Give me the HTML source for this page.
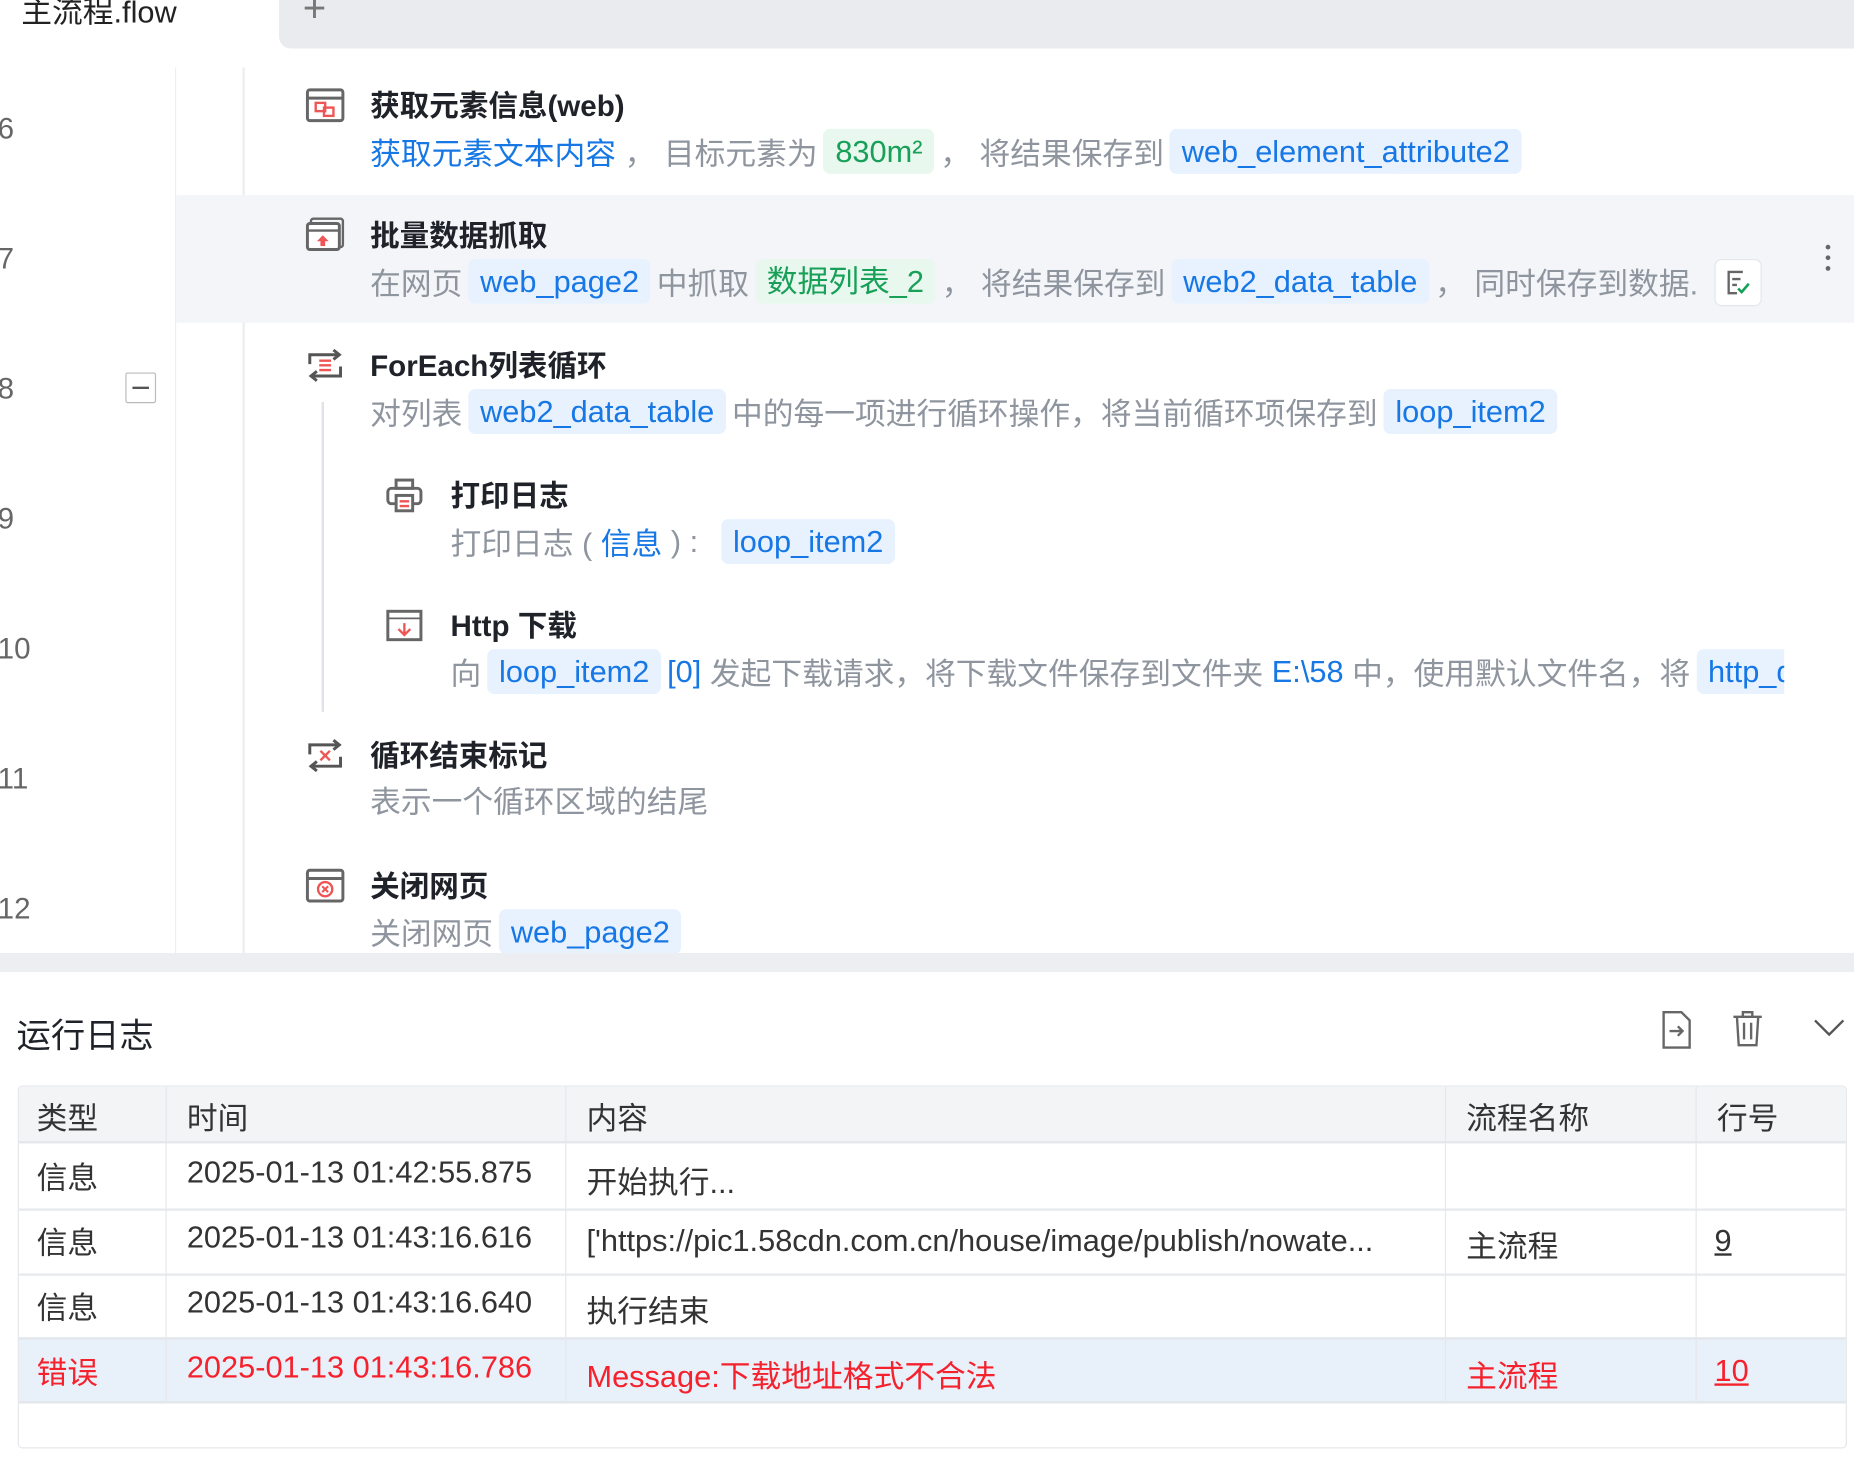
<!DOCTYPE html>
<html><head><meta charset="utf-8"><style>
*{margin:0;padding:0;box-sizing:border-box}
html,body{width:1854px;height:1479px;overflow:hidden;background:#fff}
#w{position:absolute;left:0;top:0;width:1568px;height:1251px;transform:scale(1.18240);transform-origin:0 0;font-family:"Liberation Sans","Noto Sans CJK SC",sans-serif;color:#222}
.a{position:absolute;white-space:nowrap}
.ln{position:absolute;left:-2px;font-size:25px;color:#666}
.t{position:absolute;font-size:25px;font-weight:bold;color:#1f2329}
.s{position:absolute;font-size:26px;color:#8f959e;display:flex;align-items:center;white-space:nowrap;height:38px}
.tg{background:#e8f2ff;color:#1677e5;border-radius:6px;padding:0 10px;height:38px;line-height:38px;margin:0 5px}
.tgg{background:#e9f8ef;color:#18a058}
.b{color:#1677e5}
.ic{position:absolute}
.cell{position:absolute;font-size:26px;color:#333;white-space:nowrap}
</style></head><body><div id="w">
<div class="a" style="left:236px;top:0;width:1332px;height:41px;background:#e9ebef;border-bottom-left-radius:10px"></div>
<div class="a" style="left:18px;top:-10px;font-size:26px;color:#222">主流程.flow</div>
<div class="a" style="left:256px;top:-12px;font-size:34px;color:#777;font-weight:300">+</div>
<div class="a" style="left:148px;top:57px;width:1px;height:749px;background:#eceef1"></div>
<div class="a" style="left:205px;top:57px;width:2px;height:749px;background:#eceef1"></div>
<div class="a" style="left:149px;top:165px;width:1419px;height:108px;background:#f3f5f9"></div>
<div class="ln" style="top:95px">6</div>
<div class="ln" style="top:205px">7</div>
<div class="ln" style="top:315px">8</div>
<div class="ln" style="top:425px">9</div>
<div class="ln" style="top:535px">10</div>
<div class="ln" style="top:645px">11</div>
<div class="ln" style="top:755px">12</div>
<div class="a" style="left:106px;top:315px;width:26px;height:26px;border:1.5px solid #bbb;border-radius:2px"></div>
<div class="a" style="left:112px;top:327px;width:14px;height:2px;background:#555"></div>
<div class="a" style="left:272px;top:340px;width:2px;height:262px;background:#dfe2e6"></div>

<svg class="ic" style="left:258px;top:74px" width="34" height="30" viewBox="0 0 34 30"><rect x="2" y="2" width="30" height="26" rx="2" fill="none" stroke="#666" stroke-width="2.5"/><line x1="2" y1="9" x2="32" y2="9" stroke="#666" stroke-width="2.5"/><rect x="9" y="13" width="8" height="7" fill="none" stroke="#e55" stroke-width="2"/><rect x="16" y="17" width="8" height="7" fill="none" stroke="#e55" stroke-width="2"/></svg>
<div class="t" style="left:313px;top:70px">获取元素信息(web)</div>
<div class="s" style="left:313px;top:109px"><span class="b">获取元素文本内容</span>&nbsp;，&nbsp;目标元素为<span class="tg tgg">830m²</span>，&nbsp;将结果保存到<span class="tg">web_element_attribute2</span></div>

<svg class="ic" style="left:258px;top:183px" width="34" height="30" viewBox="0 0 34 30"><rect x="5" y="2" width="27" height="24" rx="2" fill="none" stroke="#666" stroke-width="2"/><rect x="2" y="6" width="27" height="22" rx="2" fill="#fff" stroke="#666" stroke-width="2.5"/><line x1="2" y1="12" x2="29" y2="12" stroke="#666" stroke-width="2"/><path d="M15 16 L20 21 H17 V25 H13 V21 H10Z" fill="#e55"/></svg>
<div class="t" style="left:313px;top:180px">批量数据抓取</div>
<div class="s" style="left:313px;top:219px;width:1125px;overflow:hidden">在网页<span class="tg">web_page2</span>中抓取<span class="tg tgg">数据列表_2</span>，&nbsp;将结果保存到<span class="tg">web2_data_table</span>，&nbsp;同时保存到数据...</div>
<div class="a" style="left:1450px;top:219px;width:40px;height:40px;border:1px solid #e3e6ea;border-radius:6px;background:#fff"></div>
<svg class="ic" style="left:1458px;top:227px" width="24" height="24" viewBox="0 0 24 24"><path d="M16 3H4v18h7" fill="none" stroke="#666" stroke-width="2"/><line x1="7" y1="9" x2="14" y2="9" stroke="#666" stroke-width="2"/><line x1="7" y1="14" x2="11" y2="14" stroke="#666" stroke-width="2"/><path d="M12 17l3 3 6-7" fill="none" stroke="#18a058" stroke-width="2.2"/></svg>
<div class="a" style="left:1544px;top:207px;width:4px;height:4px;border-radius:2px;background:#666;box-shadow:0 9px 0 #666,0 18px 0 #666"></div>

<svg class="ic" style="left:258px;top:294px" width="34" height="30" viewBox="0 0 34 30"><path d="M4 14V6h24" fill="none" stroke="#555" stroke-width="2.5"/><path d="M24 2l5 4-5 4" fill="none" stroke="#555" stroke-width="2.5"/><path d="M30 16v8H6" fill="none" stroke="#555" stroke-width="2.5"/><path d="M10 20l-5 4 5 4" fill="none" stroke="#555" stroke-width="2.5"/><line x1="12" y1="11" x2="22" y2="11" stroke="#e55" stroke-width="2"/><line x1="12" y1="15" x2="22" y2="15" stroke="#e55" stroke-width="2"/><line x1="12" y1="19" x2="22" y2="19" stroke="#e55" stroke-width="2"/></svg>
<div class="t" style="left:313px;top:290px">ForEach列表循环</div>
<div class="s" style="left:313px;top:329px">对列表<span class="tg">web2_data_table</span>中的每一项进行循环操作，将当前循环项保存到<span class="tg">loop_item2</span></div>

<svg class="ic" style="left:326px;top:404px" width="32" height="30" viewBox="0 0 32 30"><rect x="9" y="2" width="14" height="7" fill="none" stroke="#666" stroke-width="2.5"/><rect x="2" y="9" width="28" height="13" rx="3" fill="none" stroke="#666" stroke-width="2.5"/><rect x="9" y="15" width="14" height="13" fill="#fff" stroke="#666" stroke-width="2.5"/><line x1="12" y1="20" x2="20" y2="20" stroke="#e55" stroke-width="2"/><line x1="12" y1="24" x2="20" y2="24" stroke="#e55" stroke-width="2"/></svg>
<div class="t" style="left:381px;top:400px">打印日志</div>
<div class="s" style="left:381px;top:439px">打印日志&nbsp;(&nbsp;<span class="b">信息</span>&nbsp;)&nbsp;:&nbsp;&nbsp;<span class="tg">loop_item2</span></div>

<svg class="ic" style="left:326px;top:514px" width="32" height="30" viewBox="0 0 32 30"><rect x="2" y="3" width="28" height="24" fill="none" stroke="#666" stroke-width="2.5"/><line x1="2" y1="9" x2="30" y2="9" stroke="#666" stroke-width="1.5"/><path d="M16 13v10M11 18l5 5 5-5" fill="none" stroke="#e55" stroke-width="2"/></svg>
<div class="t" style="left:381px;top:510px">Http 下载</div>
<div class="s" style="left:381px;top:549px;width:1128px;overflow:hidden">向<span class="tg">loop_item2</span><span class="b">[0]</span>&nbsp;发起下载请求，将下载文件保存到文件夹&nbsp;<span class="b">E:\58</span>&nbsp;中，使用默认文件名，将<span class="tg">http_download</span></div>

<svg class="ic" style="left:258px;top:624px" width="34" height="30" viewBox="0 0 34 30"><path d="M4 14V6h24" fill="none" stroke="#555" stroke-width="2.5"/><path d="M24 2l5 4-5 4" fill="none" stroke="#555" stroke-width="2.5"/><path d="M30 16v8H6" fill="none" stroke="#555" stroke-width="2.5"/><path d="M10 20l-5 4 5 4" fill="none" stroke="#555" stroke-width="2.5"/><path d="M13 11l8 8M21 11l-8 8" stroke="#e55" stroke-width="2"/></svg>
<div class="t" style="left:313px;top:620px">循环结束标记</div>
<div class="s" style="left:313px;top:657px">表示一个循环区域的结尾</div>

<svg class="ic" style="left:258px;top:734px" width="34" height="30" viewBox="0 0 34 30"><rect x="2" y="2" width="30" height="26" rx="2" fill="none" stroke="#666" stroke-width="2.5"/><line x1="2" y1="9" x2="32" y2="9" stroke="#666" stroke-width="2.5"/><circle cx="17" cy="18" r="6" fill="none" stroke="#e55" stroke-width="2"/><path d="M14.5 15.5l5 5M19.5 15.5l-5 5" stroke="#e55" stroke-width="1.8"/></svg>
<div class="t" style="left:313px;top:730px">关闭网页</div>
<div class="s" style="left:313px;top:769px">关闭网页<span class="tg">web_page2</span></div>

<div class="a" style="left:0;top:806px;width:1568px;height:16px;background:#eceef2"></div>
<div class="a" style="left:14px;top:853px;font-size:29px;color:#1f2329">运行日志</div>
<svg class="ic" style="left:1404px;top:854px" width="28" height="34" viewBox="0 0 28 34"><path d="M3 2h15l7 7v23H3z" fill="none" stroke="#666" stroke-width="2"/><path d="M8 18h11M15 14l4 4-4 4" fill="none" stroke="#666" stroke-width="2"/></svg>
<svg class="ic" style="left:1464px;top:854px" width="28" height="32" viewBox="0 0 28 32"><path d="M2 6h24M10 6V2h8v4M5 6l1.5 24h15L23 6" fill="none" stroke="#666" stroke-width="2"/><path d="M11 11v14M17 11v14" stroke="#666" stroke-width="2"/></svg>
<svg class="ic" style="left:1533px;top:860px" width="28" height="20" viewBox="0 0 28 20"><path d="M2 3l12 12 12-12" fill="none" stroke="#555" stroke-width="2"/></svg>
<div class="a" style="left:15px;top:918px;width:1547px;height:307px;border:1px solid #e5e7eb;border-radius:4px;overflow:hidden">
 <div class="a" style="left:0;top:0;width:1547px;height:48px;background:#f3f4f6;border-bottom:2px solid #e5e7eb"></div>
 <div class="a" style="left:0;top:103px;width:1547px;height:2px;background:#e8eaed"></div>
 <div class="a" style="left:0;top:158px;width:1547px;height:2px;background:#e8eaed"></div>
 <div class="a" style="left:0;top:212px;width:1547px;height:56px;background:#e8f0fa;border-top:2px solid #e3e6ea;border-bottom:2px solid #e3e6ea"></div>
 <div class="a" style="left:124px;top:0;width:1px;height:268px;background:#e5e7eb"></div>
 <div class="a" style="left:462px;top:0;width:1px;height:268px;background:#e5e7eb"></div>
 <div class="a" style="left:1206px;top:0;width:1px;height:268px;background:#e5e7eb"></div>
 <div class="a" style="left:1418px;top:0;width:1px;height:268px;background:#e5e7eb"></div>
</div>
<div class="cell" style="left:31px;top:926px">类型</div><div class="cell" style="left:158px;top:926px">时间</div><div class="cell" style="left:496px;top:926px">内容</div><div class="cell" style="left:1240px;top:926px">流程名称</div><div class="cell" style="left:1452px;top:926px">行号</div>
<div class="cell" style="left:31px;top:976px">信息</div><div class="cell" style="left:158px;top:976px">2025-01-13 01:42:55.875</div><div class="cell" style="left:496px;top:980px">开始执行...</div>
<div class="cell" style="left:31px;top:1031px">信息</div><div class="cell" style="left:158px;top:1031px">2025-01-13 01:43:16.616</div><div class="cell" style="left:496px;top:1034px">['https://pic1.58cdn.com.cn/house/image/publish/nowate...</div><div class="cell" style="left:1240px;top:1034px">主流程</div><div class="cell" style="left:1450px;top:1034px;text-decoration:underline">9</div>
<div class="cell" style="left:31px;top:1086px">信息</div><div class="cell" style="left:158px;top:1086px">2025-01-13 01:43:16.640</div><div class="cell" style="left:496px;top:1089px">执行结束</div>
<div class="cell" style="left:31px;top:1141px;color:#f5222d">错误</div><div class="cell" style="left:158px;top:1141px;color:#f5222d">2025-01-13 01:43:16.786</div><div class="cell" style="left:496px;top:1144px;color:#f5222d">Message:下载地址格式不合法</div><div class="cell" style="left:1240px;top:1144px;color:#f5222d">主流程</div><div class="cell" style="left:1450px;top:1144px;color:#f5222d;text-decoration:underline">10</div>
</div></body></html>
